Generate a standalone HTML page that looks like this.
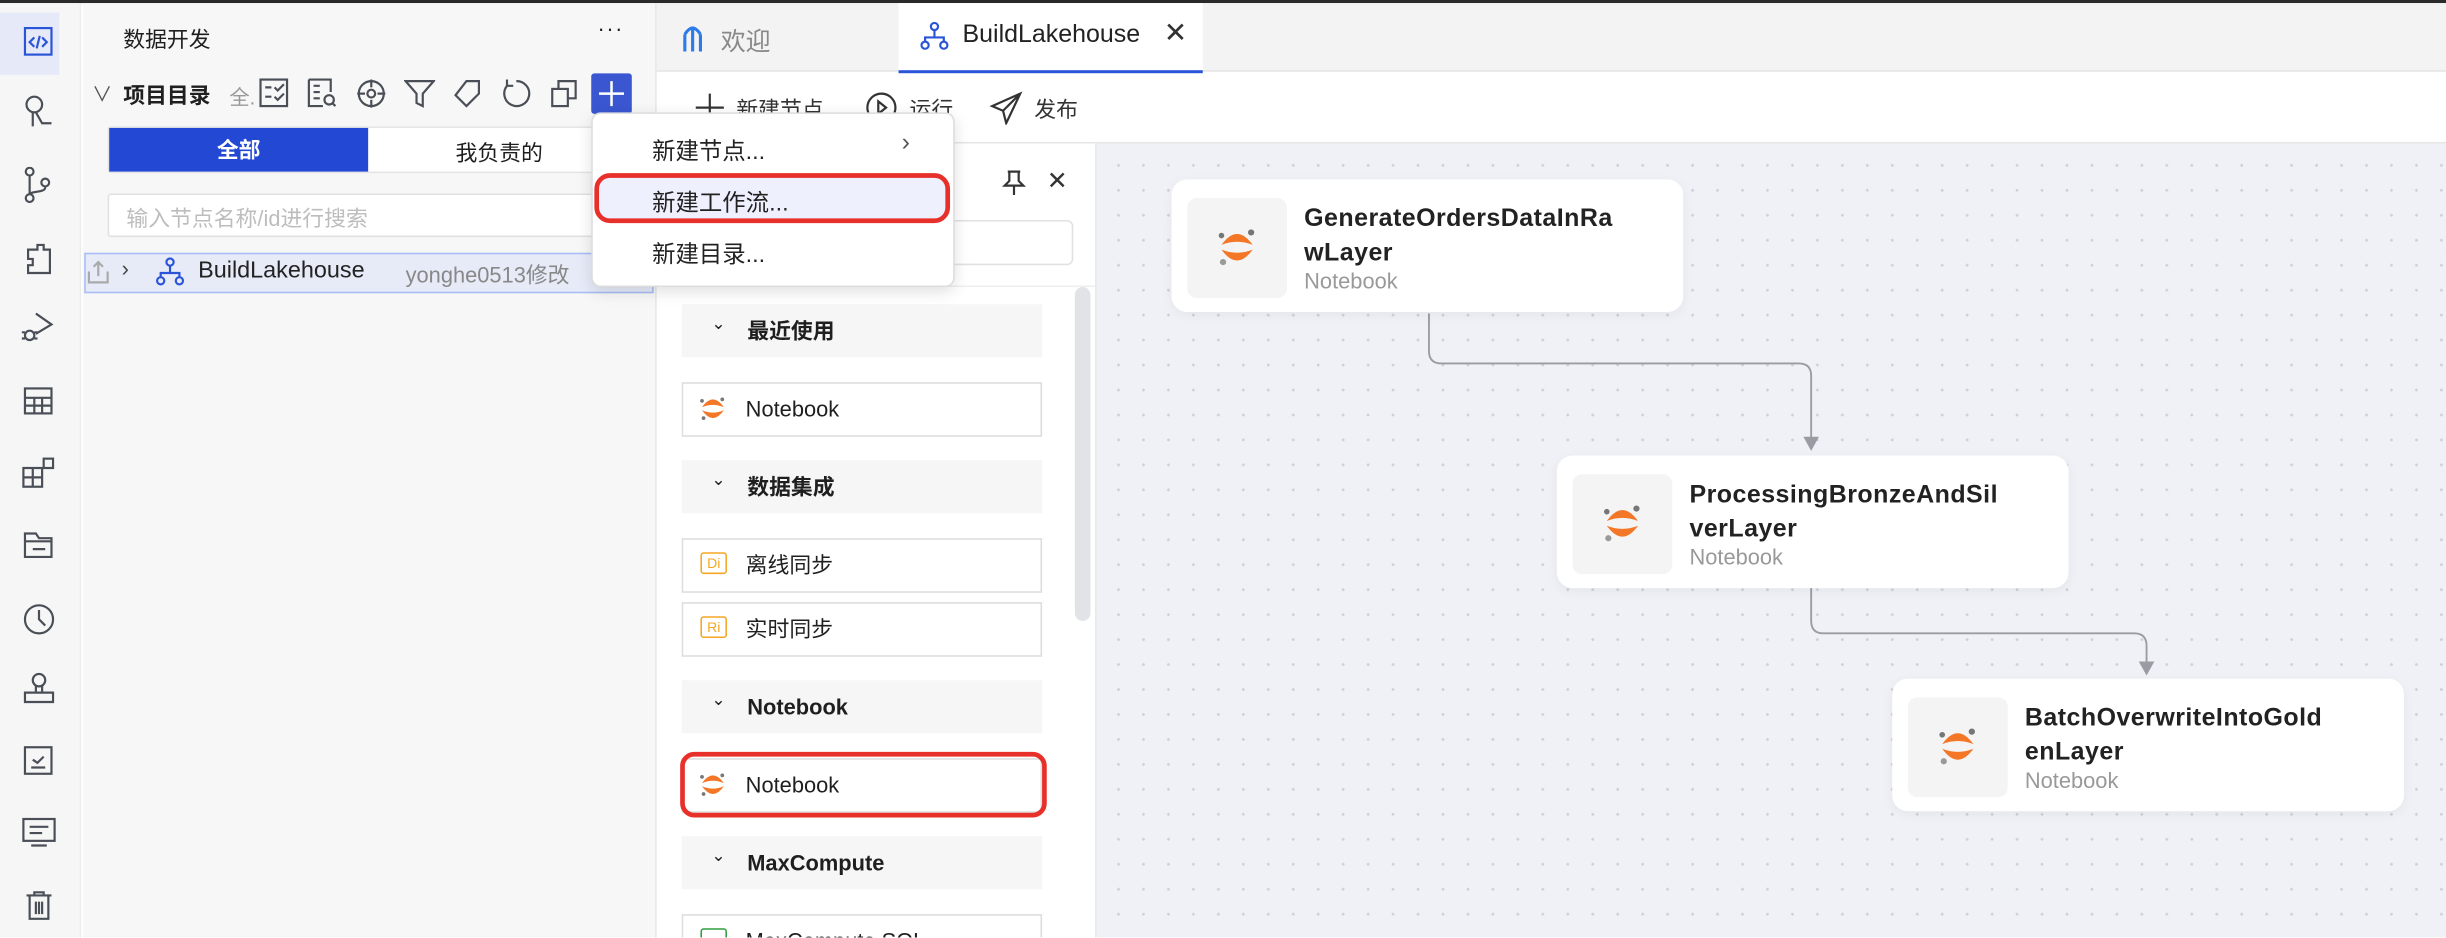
<!DOCTYPE html>
<html><head><meta charset="utf-8">
<style>
*{box-sizing:border-box;margin:0;padding:0}
html,body{width:2446px;height:938px;overflow:hidden;background:#fff}
#s{position:absolute;left:0;top:0;width:1568px;height:601px;transform:scale(1.56);transform-origin:0 0;font-family:"Liberation Sans","Noto Sans CJK SC",sans-serif;color:#1f1f1f;overflow:hidden}
.a{position:absolute}
.ic{position:absolute;stroke:#4a4f57;fill:none;stroke-width:1.4}
.t{position:absolute;white-space:nowrap}
.grp{position:absolute;left:437px;width:231px;height:34px;background:#f6f6f6;font-weight:bold;font-size:14px;line-height:34px;padding-left:42px}
.grp:before{content:"⌄";position:absolute;left:19px;top:-4px;font-size:11px;font-weight:normal}
.it{position:absolute;left:437px;width:231px;height:35px;border:1px solid #ddd;font-size:14px;line-height:33px;padding-left:40px;background:#fff}
.card{position:absolute;width:328px;height:85px;background:#fff;border-radius:10px;box-shadow:0 2px 8px rgba(0,0,0,.05)}
.card .ib{position:absolute;left:10px;top:12px;width:64px;height:64px;background:#f4f4f4;border-radius:6px}
.card .ti{position:absolute;left:85px;top:15px;font-weight:bold;font-size:16px;line-height:22px;color:#222;white-space:nowrap;letter-spacing:0.3px}
.card .su{position:absolute;left:85px;top:57px;font-size:14px;color:#999}
</style></head><body><div id="s">
<div class="a" style="left:0;top:0;width:1568px;height:2px;background:#2a2a2a"></div>
<div class="a" style="left:0;top:2px;width:52px;height:599px;background:#f6f6f6;border-right:1px solid #ececec"></div>
<div class="a" style="left:0;top:8px;width:38px;height:40px;background:#e6eaf8"></div>
<svg class="ic" style="left:15px;top:17px;stroke:#2b55d8" width="20" height="20"><rect x="1" y="1" width="17" height="17"/><path d="M7 7l-3 3 3 3M12 7l3 3-3 3M10.5 6l-2 8"/></svg>
<svg class="ic" style="left:14px;top:60px" width="22" height="22"><circle cx="8" cy="7" r="5"/><path d="M7 12v9M9 12l4 7h6"/></svg>
<svg class="ic" style="left:15px;top:107px" width="20" height="24"><circle cx="4" cy="3" r="2.5"/><circle cx="4" cy="20" r="2.5"/><circle cx="14" cy="10" r="2.5"/><path d="M4 6v11M14 13c0 4-10 2-10 5"/></svg>
<svg class="ic" style="left:14px;top:155px" width="22" height="22"><path d="M4 5h6v-3h4v3h4v15h-14v-5h3v-4h-3z"/></svg>
<svg class="ic" style="left:13px;top:199px" width="24" height="22"><path d="M10 2l10 7-10 6"/><circle cx="6" cy="16" r="3"/><path d="M1 14h2M1 18h2M9 14h2M9 18h2"/></svg>
<svg class="ic" style="left:15px;top:248px" width="20" height="20"><rect x="1" y="1" width="17" height="16"/><path d="M1 7h17M1 12h17M7 7v10M12 7v10"/></svg>
<svg class="ic" style="left:14px;top:293px" width="22" height="22"><rect x="1" y="7" width="12" height="12"/><path d="M7 7v12M1 13h12"/><rect x="14" y="1" width="6" height="6"/></svg>
<svg class="ic" style="left:15px;top:341px" width="20" height="18"><path d="M1 1h7l2 3h8v12h-17zM1 6h17M6 11h8"/></svg>
<svg class="ic" style="left:14px;top:386px" width="22" height="22"><circle cx="11" cy="11" r="9"/><path d="M11 5v6l4 4"/></svg>
<svg class="ic" style="left:15px;top:431px" width="20" height="22"><circle cx="10" cy="5" r="4"/><path d="M8 9v4M12 9v4M1 13h18v6h-18z"/></svg>
<svg class="ic" style="left:15px;top:478px" width="20" height="20"><rect x="1" y="1" width="17" height="17"/><path d="M5 14h9M6 9l3 2 4-4"/></svg>
<svg class="ic" style="left:14px;top:524px" width="22" height="20"><rect x="1" y="1" width="20" height="14"/><path d="M5 6h12M5 10h8M6 18h10"/></svg>
<svg class="ic" style="left:16px;top:570px" width="18" height="20"><path d="M1 4h16M6 4v-2h6v2M3 4v15h12v-15M7 8v8M9 8v8M11 8v8"/></svg>
<div class="a" style="left:53px;top:2px;width:368px;height:599px;background:#f7f7f7;border-right:1px solid #e6e6e6"></div>
<div class="t" style="left:79px;top:15px;font-size:14px">数据开发</div>
<div class="t" style="left:383px;top:10px;font-size:14px;letter-spacing:1px">···</div>
<div class="t" style="left:59px;top:50px;font-size:13px;color:#555">∨</div>
<div class="t" style="left:79px;top:51px;font-size:14px;font-weight:bold">项目目录</div>
<div class="t" style="left:147px;top:52px;font-size:13px;color:#999">全.</div>
<svg class="ic" style="left:166px;top:50px" width="20" height="20"><rect x="1" y="1" width="17" height="17"/><path d="M4 6h4M4 12h4M10 6l2 2 4-4M10 12l2 2 4-4"/></svg>
<svg class="ic" style="left:197px;top:50px" width="20" height="20"><path d="M1 1h14v8M1 1v17h9M4 5h4M4 9h4M4 13h4"/><circle cx="14" cy="14" r="3"/><path d="M16 16l2 2"/></svg>
<svg class="ic" style="left:228px;top:50px" width="20" height="20"><circle cx="10" cy="10" r="8"/><circle cx="10" cy="10" r="2.5"/><path d="M10 1v5M10 14v5M1 10h5M14 10h5"/></svg>
<svg class="ic" style="left:259px;top:50px" width="20" height="20"><path d="M1 2h18l-7 8v8l-4-2v-6z"/></svg>
<svg class="ic" style="left:290px;top:50px" width="20" height="20"><path d="M9 2h8v8l-8 8-7-7zM13 6v0"/></svg>
<svg class="ic" style="left:321px;top:50px" width="20" height="20"><path d="M10 2a8 8 0 1 1-6 3M4 1v4h4"/></svg>
<svg class="ic" style="left:352px;top:50px" width="20" height="20"><rect x="2" y="7" width="10" height="11"/><path d="M6 7v-5h11v11h-5"/></svg>
<div class="a" style="left:379px;top:47px;width:26px;height:26px;background:#3a57d1;border-radius:2px"></div>
<svg class="a" style="left:383px;top:51px" width="18" height="18"><path d="M9 1v16M1 9h16" stroke="#fff" stroke-width="1.6"/></svg>
<div class="a" style="left:69px;top:81px;width:350px;height:30px;background:#fff;border:1px solid #e4e4e4;border-radius:2px"></div>
<div class="a" style="left:70px;top:82px;width:166px;height:28px;background:#2348d3;color:#fff;font-size:14px;font-weight:bold;text-align:center;line-height:28px">全部</div>
<div class="t" style="left:292px;top:88px;font-size:14px">我负责的</div>
<div class="a" style="left:69px;top:124px;width:350px;height:28px;background:#fff;border:1px solid #e1e1e1;border-radius:2px"></div>
<div class="t" style="left:81px;top:130px;font-size:14px;color:#bdbdbd">输入节点名称/id进行搜索</div>
<div class="a" style="left:54px;top:162px;width:365px;height:26px;background:#e7ebf8;border:1px solid #a9bef5"></div>
<svg class="ic" style="left:56px;top:166px;stroke:#aaa" width="14" height="16"><path d="M7 2v9M4 5l3-3 3 3M1 8v7h12v-7"/></svg>
<div class="t" style="left:78px;top:164px;font-size:14px;color:#444">›</div>
<svg class="ic" style="left:100px;top:165px;stroke:#2b55d8" width="18" height="18"><circle cx="9" cy="3" r="2.3"/><circle cx="3" cy="15" r="2.3"/><circle cx="15" cy="15" r="2.3"/><path d="M9 5v5M3 13v-3h12v3"/></svg>
<div class="t" style="left:127px;top:165px;font-size:15px;color:#222">BuildLakehouse</div>
<div class="t" style="left:260px;top:166px;font-size:14px;color:#888">yonghe0513修改</div>
<div class="a" style="left:421px;top:2px;width:1147px;height:44px;background:#f3f3f3;border-bottom:1px solid #e6e6e6"></div>
<svg class="a" style="left:436px;top:14px" width="16" height="20"><path d="M3 19V8M8 19V3M13 19V8M3 8q5-8 10 0" stroke="#2b7ce8" fill="none" stroke-width="2"/></svg>
<div class="t" style="left:462px;top:13px;font-size:16px;color:#888">欢迎</div>
<div class="a" style="left:576px;top:2px;width:195px;height:45px;background:#fff;border-bottom:2px solid #2b55d8"></div>
<svg class="ic" style="left:590px;top:14px;stroke:#2b55d8" width="18" height="18"><circle cx="9" cy="3" r="2.3"/><circle cx="3" cy="15" r="2.3"/><circle cx="15" cy="15" r="2.3"/><path d="M9 5v5M3 13v-3h12v3"/></svg>
<div class="t" style="left:617px;top:14px;font-size:16px;color:#222">BuildLakehouse</div>
<div class="t" style="left:746px;top:11px;font-size:18px;color:#333">✕</div>
<div class="a" style="left:421px;top:47px;width:1147px;height:45px;background:#fff;border-bottom:1px solid #e6e6e6"></div>
<svg class="ic" style="left:445px;top:59px;stroke:#333" width="20" height="20"><path d="M10 1v18M1 10h18"/></svg>
<div class="t" style="left:472px;top:60px;font-size:14px;color:#333">新建节点</div>
<svg class="ic" style="left:555px;top:59px;stroke:#333" width="20" height="20"><circle cx="10" cy="10" r="9"/><path d="M8 6l5 4-5 4z"/></svg>
<div class="t" style="left:583px;top:60px;font-size:14px;color:#333">运行</div>
<svg class="ic" style="left:634px;top:58px;stroke:#333" width="22" height="22"><path d="M20 2L2 10l7 3 2 8zM9 13l11-11"/></svg>
<div class="t" style="left:663px;top:60px;font-size:14px;color:#333">发布</div>
<div class="a" style="left:421px;top:92px;width:282px;height:509px;background:#fff;border-right:1px solid #e6e6e6"></div>
<svg class="ic" style="left:642px;top:108px;stroke:#333" width="16" height="18"><path d="M4 2h8M5 2v6l-3 3h12l-3-3v-6M8 11v6"/></svg>
<div class="t" style="left:671px;top:106px;font-size:16px;color:#333">✕</div>
<div class="a" style="left:590px;top:141px;width:98px;height:29px;border:1px solid #e1e1e1;border-radius:4px"></div>
<div class="a" style="left:422px;top:183px;width:280px;height:1px;background:#eee"></div>
<div class="a" style="left:689px;top:184px;width:10px;height:214px;background:#e1e3e7;border-radius:5px"></div>
<div class="grp" style="top:195px">最近使用</div>
<div class="it" style="top:245px">Notebook</div>
<div class="grp" style="top:295px">数据集成</div>
<div class="it" style="top:345px">离线同步</div>
<div class="it" style="top:386px">实时同步</div>
<div class="grp" style="top:436px">Notebook</div>
<div class="it" style="top:486px">Notebook</div>
<div class="grp" style="top:536px">MaxCompute</div>
<div class="it" style="top:586px">MaxCompute SQL</div>
<div class="a" style="left:449px;top:354px;width:17px;height:14px;border:1px solid #f5a623;border-radius:2px;font-size:9px;color:#f5a623;text-align:center;line-height:12px">Di</div>
<div class="a" style="left:449px;top:395px;width:17px;height:14px;border:1px solid #f5a623;border-radius:2px;font-size:9px;color:#f5a623;text-align:center;line-height:12px">Ri</div>
<div class="a" style="left:449px;top:595px;width:17px;height:14px;border:1px solid #2e9e3e;border-radius:2px"></div>
<svg class="a" style="left:447px;top:253px" width="20" height="18"><path d="M3 8Q10 -2 17 8Q10 5 3 8z M3 10Q10 20 17 10Q10 13 3 10z" fill="#f37726"/><circle cx="3" cy="4" r="1.2" fill="#777"/><circle cx="16" cy="3" r="1.2" fill="#777"/><circle cx="4" cy="15" r="1.2" fill="#777"/></svg>
<svg class="a" style="left:447px;top:494px" width="20" height="18"><path d="M3 8Q10 -2 17 8Q10 5 3 8z M3 10Q10 20 17 10Q10 13 3 10z" fill="#f37726"/><circle cx="3" cy="4" r="1.2" fill="#777"/><circle cx="16" cy="3" r="1.2" fill="#777"/><circle cx="4" cy="15" r="1.2" fill="#777"/></svg>
<div class="a" style="left:436px;top:482px;width:235px;height:42px;border:3px solid #e8302b;border-radius:9px"></div>
<div class="a" style="left:703px;top:92px;width:865px;height:509px;background-color:#f0f1f6;background-image:radial-gradient(#cfd1d8 0.8px,transparent 1px);background-size:16px 16px;background-position:6px 6px"></div>
<svg class="a" style="left:703px;top:92px" width="865" height="509"><g stroke="#9a9ca3" fill="none" stroke-width="1.2"><path d="M213 109v24q0 8 8 8h229q8 0 8 8v43"/><path d="M458 284v22q0 8 8 8h199q8 0 8 8v14"/></g><path d="M453 188h10l-5 9z M668 332h10l-5 9z" fill="#9a9ca3"/></svg>
<div class="card" style="left:751px;top:115px"><div class="ib"></div><svg class="a" style="left:28px;top:31px" width="28" height="26"><path d="M4 11Q14 -3 24 11Q14 7 4 11z M4 14Q14 28 24 14Q14 18 4 14z" fill="#f37726"/><circle cx="4" cy="5" r="1.8" fill="#767676"/><circle cx="23" cy="3" r="2" fill="#767676"/><circle cx="5" cy="22" r="2" fill="#9a9a9a"/></svg><div class="ti">GenerateOrdersDataInRa<br>wLayer</div><div class="su">Notebook</div></div>
<div class="card" style="left:998px;top:292px"><div class="ib"></div><svg class="a" style="left:28px;top:31px" width="28" height="26"><path d="M4 11Q14 -3 24 11Q14 7 4 11z M4 14Q14 28 24 14Q14 18 4 14z" fill="#f37726"/><circle cx="4" cy="5" r="1.8" fill="#767676"/><circle cx="23" cy="3" r="2" fill="#767676"/><circle cx="5" cy="22" r="2" fill="#9a9a9a"/></svg><div class="ti">ProcessingBronzeAndSil<br>verLayer</div><div class="su">Notebook</div></div>
<div class="card" style="left:1213px;top:435px"><div class="ib"></div><svg class="a" style="left:28px;top:31px" width="28" height="26"><path d="M4 11Q14 -3 24 11Q14 7 4 11z M4 14Q14 28 24 14Q14 18 4 14z" fill="#f37726"/><circle cx="4" cy="5" r="1.8" fill="#767676"/><circle cx="23" cy="3" r="2" fill="#767676"/><circle cx="5" cy="22" r="2" fill="#9a9a9a"/></svg><div class="ti">BatchOverwriteIntoGold<br>enLayer</div><div class="su">Notebook</div></div>
<div class="a" style="left:379px;top:72px;width:233px;height:112px;background:#fff;border:1px solid #ddd;border-radius:6px;box-shadow:0 3px 10px rgba(0,0,0,.12)"></div>
<div class="t" style="left:418px;top:86px;font-size:15px;color:#222">新建节点...</div>
<div class="t" style="left:578px;top:83px;font-size:16px;color:#555">›</div>
<div class="a" style="left:381px;top:111px;width:228px;height:32px;background:#eef1fd;border:3px solid #e8302b;border-radius:10px"></div>
<div class="t" style="left:418px;top:119px;font-size:15px;color:#222">新建工作流...</div>
<div class="t" style="left:418px;top:152px;font-size:15px;color:#222">新建目录...</div>
</div></body></html>
